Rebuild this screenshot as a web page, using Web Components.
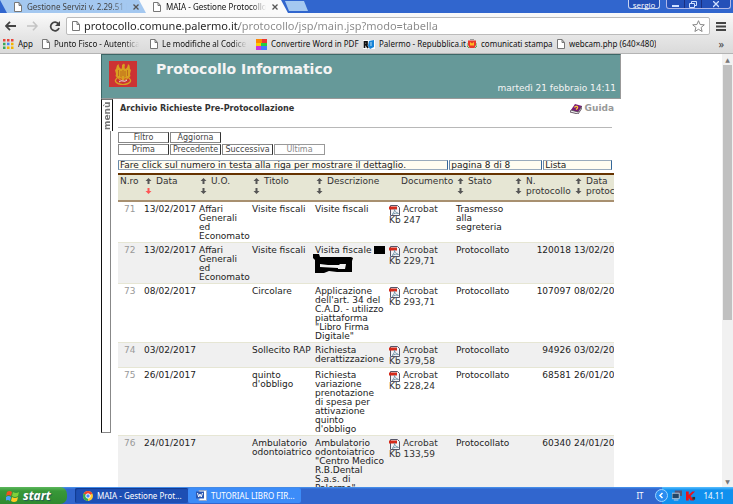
<!DOCTYPE html>
<html lang="it">
<head>
<meta charset="utf-8">
<title>MAIA - Gestione Protocollo Informatico</title>
<style>
html,body{height:100%;margin:0}
body{font:9px/9px "DejaVu Sans",sans-serif;color:#222;background:#fff;overflow:hidden}
</style>
</head>
<body>
<desktop-screen></desktop-screen>
<script>
function define(name, css, html, setup) {
  const t = document.createElement('template');
  t.innerHTML = '<style>*{box-sizing:border-box}a{color:inherit;text-decoration:none}svg{display:block;flex:none}button{font:inherit;margin:0;padding:0;cursor:pointer}' + css + '</style>' + html;
  customElements.define(name, class extends HTMLElement {
    connectedCallback() {
      if (this.shadowRoot) return;
      const root = this.attachShadow({ mode: 'open' });
      root.append(t.content.cloneNode(true));
      if (setup) setup.call(this, root);
    }
  });
}
const pageIcon = '<svg width="8" height="10" viewBox="0 0 8 10"><path d="M.5.5h4.5l2.500 3v6h-7zM5 .5v3h2.500" fill="#fff" stroke="#777"/></svg>';
const icons = {
  page: pageIcon,
  apps: '<svg width="11" height="10" viewBox="0 0 11 10"><path fill="#e8453c" d="M0 0h2.500v2.500H0zM4 0h2.500v2.500H4zM8 0h2.500v2.500H8z"/><path fill="#3aa757" d="M0 3.700h2.500v2.500H0zM0 7.400h2.500v2.500H0z"/><path fill="#4688f1" d="M4 3.700h2.500v2.500H4z"/><path fill="#f4b400" d="M8 3.700h2.500v2.500H8zM4 7.400h2.500v2.500H4zM8 7.400h2.500v2.500H8z"/></svg>',
  rainbow: '<svg width="11" height="11" viewBox="0 0 11 11"><path fill="#e33" d="M0 0h11v4H0z"/><path fill="#f80" d="M0 0h6v4H0z"/><path fill="#fc0" d="M0 4h5v3H0z"/><path fill="#2c4" d="M5 4h6v3H5z"/><path fill="#c3d" d="M0 7h5v4H0z"/><path fill="#47f" d="M5 7h6v4H5z"/></svg>',
  rep: '<svg width="12" height="9" viewBox="0 0 12 9"><path fill="#fff" d="M0 0h12v9H0z"/><path d="M1.500 1v7M1 1.800h3v2.500H1M3 4.500l2 3.500" fill="none" stroke="#111" stroke-width="1.700"/><path d="M6 1l5-1v7l-4 2-2-3z" fill="#1683d8"/><path d="M8 2v4" stroke="#bde"/></svg>',
  crest: '<svg width="10" height="10" viewBox="0 0 10 10"><path d="M3 0h4v1H3z" fill="#999"/><path d="M1 1.500h8v4.500L7.500 9h-5L1 6z" fill="#e8392b"/><path d="M3 6.500V3l2 1.500L7 3v3.500z" fill="#fb2"/><path d="M0 4v3l2 2M10 4v3L8 9" stroke="#5a5" fill="none"/></svg>'
};

define('browser-tab', `
:host{display:flex;align-items:center;width:149px;height:13px;background:#a4c8f0;clip-path:polygon(0 0,142px 0,100% 100%,7px 100%);padding:0 8px 0 14px;color:#444;font:8px/12px "Noto Sans",sans-serif}
:host([active]){background:#fafafa;color:#111}
a{display:flex;align-items:center;gap:5px;flex:1;min-width:0}
span{white-space:nowrap;overflow:hidden;-webkit-mask-image:linear-gradient(90deg,#000 85%,transparent)}
button{border:0;background:none;display:flex;width:10px;justify-content:center;margin-left:4px}`,
`<a href="#">${pageIcon}<span><slot></slot></span></a><button aria-label="Chiudi scheda"><svg width="6" height="6" viewBox="0 0 6 6"><path d="M.5.5l5 5M5.500.5l-5 5" stroke="#555" stroke-width="1.300"/></svg></button>`);

define('tab-strip', `
:host{display:flex;height:13px;background:#3166ce;align-items:stretch}
.new{width:23px;height:10px;border:0;background:#a4c8f0;clip-path:polygon(0 0,19px 0,100% 100%,4px 100%);margin:1px 0 0 -3px}
browser-tab+browser-tab{margin-left:-10px}
.fill{flex:1}
.user{width:32px;height:9px;border:1px solid #c8d4f0;border-top:0;border-radius:0 0 3px 3px;background:#2450b8;color:#fff;font:8px/7px "Open Sans",sans-serif}
.win{display:flex;margin:0 2px 0 6px;height:9px;border:1px solid #b0b8e8;border-top:0;border-radius:0 0 3px 3px;background:#2450b8}
.win button{width:17px;border:0;background:none;display:flex;justify-content:center;align-items:center}
.win button+button{border-left:1px solid #1a2f80}
.win button:last-child{width:29px}`,
`<browser-tab>Gestione Servizi v. 2.29.51 b</browser-tab><browser-tab active>MAIA - Gestione Protocollo In</browser-tab><button class="new" aria-label="Nuova scheda"></button><div class="fill"></div><button class="user">sergio</button>
<div class="win"><button aria-label="Riduci"><svg width="7" height="6"><path d="M0 5h7" stroke="#cfe0ff" stroke-width="2"/></svg></button><button aria-label="Ripristina"><svg width="8" height="7" fill="none" stroke="#cfe0ff"><path d="M2.500 2V.5h5v4H6M.5 2.500h5v4h-5z"/></svg></button><button aria-label="Chiudi"><svg width="6" height="7"><path d="M0 0l6 6M6 0L0 6" stroke="#cfe0ff" stroke-width="1.300"/></svg></button></div>`);

define('address-bar', `
:host{display:flex;align-items:center;height:23px;padding:4px 7px 1px 5px;background:linear-gradient(#fafafa,#e6e6e6);gap:11px}
button{border:0;background:none;display:flex}
form{flex:1;display:flex;align-items:center;height:18px;margin:0 -5px 0 -6px;padding:0 4px 0 5px;border:1px solid #bbb;border-radius:2px;background:#fff;gap:4px}
input{flex:1;min-width:0;border:0;outline:0;padding:0;height:16px;font:11px/16px "Noto Sans",sans-serif;color:transparent;background:linear-gradient(90deg,#222 155px,#888 155px);-webkit-background-clip:text;background-clip:text}`,
`<button aria-label="Indietro"><svg width="11" height="10" viewBox="0 0 11 10"><path d="M5 .8L1 5l4 4.200M1 5h10" stroke="#444" stroke-width="1.800" fill="none"/></svg></button>
<button aria-label="Avanti"><svg width="11" height="10" viewBox="0 0 11 10"><path d="M6 .8L10 5 6 9.200M10 5H0" stroke="#c4c4c4" stroke-width="1.600" fill="none"/></svg></button>
<button aria-label="Ricarica"><svg width="12" height="11" viewBox="0 0 12 11"><path d="M9.500 3A4.300 4.300 0 1 0 10 7" stroke="#444" stroke-width="1.800" fill="none"/><path d="M11 0v5H6z" fill="#444"/></svg></button>
<form>${pageIcon}<input aria-label="Indirizzo" value="protocollo.comune.palermo.it/protocollo/jsp/main.jsp?modo=tabella"><button type="button" aria-label="Preferiti"><svg width="13" height="12" viewBox="0 0 13 12"><path d="M6.500.7l1.600 3.800 4.200.3-3.200 2.700 1 4-3.600-2.200-3.600 2.200 1-4L.7 4.800l4.200-.3z" fill="#fff" stroke="#888"/></svg></button></form>
<button aria-label="Menu"><svg width="10" height="9"><path d="M0 1h10M0 4.500h10M0 8h10" stroke="#444" stroke-width="2"/></svg></button>`);

define('bookmark-item', `
:host{display:block;flex:none;width:var(--w)}
a{display:flex;align-items:center;gap:4px}
span{white-space:nowrap;overflow:hidden}
:host([fade]) span{-webkit-mask-image:linear-gradient(90deg,#000 82%,transparent)}`,
`<a href="#"><i></i><span><slot></slot></span></a>`, function (root) { root.querySelector('i').outerHTML = icons[this.getAttribute('icon')]; });

define('bookmarks-bar', `
:host{display:flex;align-items:center;height:18px;padding:0 9px 1px 3px;background:linear-gradient(#e6e6e6,#dadada);border-bottom:1px solid #b4b4b4;font:8px/12px "Noto Sans",sans-serif;color:#111}
button{margin-left:auto;border:0;background:none;font-size:11px;line-height:12px;color:#444}`,
`<bookmark-item icon="apps" style="--w:39px">App</bookmark-item>
<bookmark-item icon="page" fade style="--w:97px;margin-right:11px">Punto Fisco - Autenticaz</bookmark-item>
<bookmark-item icon="page" fade style="--w:97px;margin-right:9px">Le modifiche al Codice di</bookmark-item>
<bookmark-item icon="rainbow" style="--w:107px">Convertire Word in PDF</bookmark-item>
<bookmark-item icon="rep" style="--w:104px">Palermo - Repubblica.it</bookmark-item>
<bookmark-item icon="crest" style="--w:90px">comunicati stampa</bookmark-item>
<bookmark-item icon="page" style="--w:110px">webcam.php (640×480)</bookmark-item>
<button aria-label="Altri preferiti">»</button>`);

define('app-header', `
:host{display:flex;height:45px;background:#669999;border:1px solid #3c6666;border-right:1px solid #999;border-bottom:1px solid #999;padding:6px 4px 4px 7px;color:#f4f4f4}
.logo{background:#cc3333;width:28px;height:26px}
h1{margin:1px 0 0 19px;font-size:14px;line-height:15px}
time{margin-left:auto;align-self:flex-end;line-height:11px}`,
`<svg class="logo" viewBox="0 0 28 26"><g fill="#d8a020"><path d="M13 4l2-1.500 1 1.500-.5 2 .5 2q2.500-.5 3-5l1.500 1.500.5 3.500 1 1-1 4 .5 2-2.500 3-2-.5-1.500-1-.5 3h-2l-.5-3-1.500 1-2 .5-2.500-3 .5-2-1-4 1-1L8 4.500 9.500 3q.5 4.500 3 5l.5-2z"/></g><path d="M8 17q-2 2-1.500 3.500Q9 23.500 14 23.500t7.500-3Q22 19 20 17M10 19q4-3 8 0" stroke="#d8a020" stroke-width="1.200" fill="none"/><path d="M10 21q2-2 4-1t4-1" stroke="#e4d8e0" fill="none"/><path d="M9.500 9v6M12 10v6M16 10v6M18.500 9v6M14 9v6" stroke="#b3541e" stroke-width=".7"/></svg>
<h1>Protocollo Informatico</h1><time>martedì 21 febbraio 14:11</time>`);

define('side-menu', `
:host{display:flex;flex-direction:column;align-items:flex-start;width:13px;height:334px;flex:none}
button{writing-mode:vertical-rl;transform:rotate(180deg);width:12px;height:32px;border:0;border-left:1px solid #111;border-right:1px solid #111;border-bottom:1px solid #777;background:#fff;font:bold 9px/9px "DejaVu Sans",sans-serif;color:#777;text-align:center}
div{flex:1;width:10px;border:solid #888;border-width:0 1px 1px 0;border-left:1px solid #111}`,
`<button>menù</button><div></div>`);

define('page-title', `
:host{display:flex;align-items:flex-start;height:29px;padding:4px 0 0 2px;border-bottom:1px solid #b8b8b8;margin-right:2px}
h2{margin:0;font:bold 9px/11px "DejaVu Sans Condensed","DejaVu Sans",sans-serif;color:#333}
a{display:flex;gap:3px;margin:0 -2px 0 auto;font-weight:bold;line-height:11px;color:#999}`,
`<h2><slot></slot></h2><a href="#"><svg width="12" height="11" viewBox="0 0 12 11"><path d="M1 7l4-6 7 2-4 6z" fill="#7a1b78"/><path d="M1 7l7 2 4-6v2L8 11 0 9z" fill="#eee" stroke="#434" stroke-width=".8"/><path d="M4.500 4.500c1-2 4-1 3 .5L6 6.500" stroke="#fc3" stroke-width="1.200" fill="none"/></svg>Guida</a>`);

define('list-toolbar', `
:host{display:grid;grid-template-columns:repeat(4,51px);gap:1px;padding-top:4px;margin-bottom:5px}
button{height:11px;border:1px solid #888;border-right-color:#333;background:#fff;font:8px/8px "DejaVu Sans",sans-serif;color:#444;white-space:nowrap}
.off{color:#888;border-color:#999}
.first{grid-column:1}`,
`<button>Filtro</button><button>Aggiorna</button><button class="first">Prima</button><button>Precedente</button><button>Successiva</button><button class="off">Ultima</button>`);

define('info-bar', `
:host{display:grid;grid-template-columns:331fr 93fr 69fr;gap:1px;margin:0 2px 3px 0}
div{height:10px;border:1px solid #9ab;border-right-color:#369;border-left-color:#68a;background:#fffcf0;padding:0 1px;line-height:9px;white-space:nowrap}`,
`<div>Fare click sul numero in testa alla riga per mostrare il dettaglio.</div><div>pagina 8 di 8</div><div>Lista</div>`);

const arrow = (up, c) => `<button aria-label="${up ? 'Ordine crescente' : 'Ordine decrescente'}"><svg width="7" height="6" viewBox="0 0 7 6"><path d="${up ? 'M3.500 0L6.500 3H4.500V6H2.500V3H.5z' : 'M3.500 6L6.500 3H4.500V0H2.500V3H.5z'}" fill="${c}"/></svg></button>`;
const pdf = '<svg width="11" height="11" viewBox="0 0 11 11"><path d="M1.500.5h7l2 2v8h-9z" fill="#f4f4f8" stroke="#556"/><path d="M0 1.500h8v3H0z" fill="#d42a1a"/><path d="M3 9.500c2-1 3-5 2.500-5.500s0 3 4 4.500c-2-1-4 0-6.500 1" stroke="#79a" fill="none"/></svg>';
const box = '<svg width="11" height="8" viewBox="0 0 11 8"><path d="M0 0h11v8H0z"/></svg>';
const mark = '<svg class="mark" width="41" height="20" viewBox="0 0 41 20"><path fill-rule="evenodd" d="M0 0h6l1 3h31l2 1-1 3v11H24l-8-1-5 2H2V6L0 4zM7 10v3l18 1v1h7l1-5h-6l-1 1H15z"/></svg>';
const rows = [
  ['71','13/02/2017','Affari<br>Generali<br>ed<br>Economato','Visite fiscali','Visite fiscali','247','Trasmesso<br>alla<br>segreteria','',''],
  ['72','13/02/2017','Affari<br>Generali<br>ed<br>Economato','Visite fiscali','<span class="red">Visita fiscale '+box+'</span>'+mark,'229,71','Protocollato','120018','13/02/2017'],
  ['73','08/02/2017','','Circolare','Applicazione<br>dell\'art. 34 del<br>C.A.D. - utilizzo<br>piattaforma<br>"Libro Firma<br>Digitale"','293,71','Protocollato','107097','08/02/2017'],
  ['74','03/02/2017','','Sollecito RAP','Richiesta<br>derattizzazione','379,58','Protocollato','94926','03/02/2017'],
  ['75','26/01/2017','','quinto<br>d\'obbligo','Richiesta<br>variazione<br>prenotazione<br>di spesa per<br>attivazione<br>quinto<br>d\'obbligo','228,24','Protocollato','68581','26/01/2017'],
  ['76','24/01/2017','','Ambulatorio<br>odontoiatrico','Ambulatorio<br>odontoiatrico<br>"Centro Medico<br>R.B.Dental<br>S.a.s. di<br>Palermo"','133,59','Protocollato','60340','24/01/2017']
];
define('records-table', `
:host{display:block;overflow:hidden}
table{table-layout:fixed;width:536px;border-collapse:collapse}
th{height:27px;padding:1px 0 2px;background:#e6e6d4;border-top:2px solid #663300;border-bottom:2px solid #a89070;text-align:left;vertical-align:top;font-weight:normal;white-space:nowrap;line-height:10px;color:#333}
th>div{display:grid;grid-template-columns:8px auto;gap:0 4px;justify-content:start}
th>div>span{grid-row:1/3;grid-column:2}
th button{grid-column:1;border:0;background:none;height:10px;display:flex;align-items:center;justify-content:center}
.plain{padding-left:2px}.doc{padding-left:12px}
td{padding:3px 0 1px;vertical-align:top;white-space:nowrap;border-bottom:1px solid #e6e6d4}
tr:nth-child(even) td{background:#f0f0f0}
td:first-child{padding-left:6px;color:#999}
td:nth-child(8){text-align:right;padding-right:3px}
td:nth-child(6){color:#333}
.pdf{display:flex;gap:3px}
.red{display:flex;gap:3px}.mark{margin:-1px 0 0 -2px}`,
`<table><colgroup><col style="width:26px"><col style="width:55px"><col style="width:53px"><col style="width:63px"><col style="width:74px"><col style="width:67px"><col style="width:58px"><col style="width:60px"><col style="width:80px"></colgroup><thead><tr></tr></thead><tbody></tbody></table>`,
function (root) {
  root.querySelector('thead tr').innerHTML = ['N.ro','Data','U.O.','Titolo','Descrizione','Documento','Stato','N.<br>protocollo','Data<br>protocollo'].map((h, i) =>
    i === 0 || i === 5 ? `<th class="${i ? 'doc' : 'plain'}">${h}</th>` :
    `<th><div>${arrow(true, '#555')}<span>${h}</span>${arrow(false, i === 1 ? '#f55' : '#555')}</div></th>`).join('');
  root.querySelector('tbody').innerHTML = rows.map(r => '<tr>' + r.map((c, i) =>
    i === 0 ? `<td><a href="#">${c}</a></td>` :
    i === 5 ? `<td><a href="#" class="pdf">${pdf}Acrobat</a><div>Kb ${c}</div></td>` : `<td>${c}</td>`).join('') + '</tr>').join('');
});

define('protocol-app', `
:host{display:block;max-width:520px;margin:0 auto}
.body{display:flex;gap:4px}
main{flex:1;min-width:0;padding-right:7px}`,
`<app-header></app-header><div class="body"><side-menu></side-menu><main><page-title>Archivio Richieste Pre-Protocollazione</page-title><list-toolbar></list-toolbar><info-bar></info-bar><records-table></records-table></main></div>`);

define('scroll-rail', `
:host{display:flex;flex-direction:column;width:11px;flex:none;background:#f1f1f1;align-items:center}
button{border:0;background:none;height:11px;width:11px;font:6px/11px "DejaVu Sans",sans-serif;color:#777}
.thumb{width:9px;height:59%;background:#c0c0c0}
button:last-child{margin-top:auto}`,
`<button aria-label="Su">▲</button><div class="thumb"></div><button aria-label="Giù">▼</button>`);

define('task-button', `
:host{display:block}
button{display:flex;align-items:center;gap:4px;width:113px;height:15px;border:0;border-radius:2px;padding:0 8px;background:#3c8cf8;color:#fff;font:8px/13px "Noto Sans",sans-serif;white-space:nowrap}
:host([active]) button{background:#1d4fb4;box-shadow:inset 1px 1px 1px #123a90}`,
`<button><slot name="icon"></slot><slot></slot></button>`);

define('task-bar', `
:host{display:flex;align-items:center;height:17px;flex:none;background:linear-gradient(#4a98f0,#3166ce 2px);color:#fff;font:8px/13px "Noto Sans",sans-serif}
.start{display:flex;align-items:center;gap:4px;width:67px;height:17px;padding:0 6px;border:0;border-radius:0 7px 7px 0;background:linear-gradient(#5cb85c,#389838 4px,#2f8a2f);color:#fff;font:italic bold 12px/15px "Open Sans",sans-serif;text-shadow:1px 1px 1px #255;margin-right:8px}
.lang{margin-left:auto;margin-right:18px}
.tray{display:flex;align-items:center;gap:4px;height:17px;padding:0 9px 0 0;background:linear-gradient(#5cc0ff,#1090ee 3px)}
.tray svg:first-child{margin-left:-7px}
.tray time{margin-left:4px}`,
`<button class="start"><svg width="13" height="12" viewBox="0 0 13 12"><path d="M1 2q2.500-2 5 0L5 6Q3 4 0 6z" fill="#f25022"/><path d="M7 2q3 2 6 0l-1 4q-3 2-6 0z" fill="#7fd03a"/><path d="M0 7q2.500-2 5 0l-1 4Q2 9-1 11z" fill="#4aa0ff"/><path d="M6 7q3 2 6 0l-1 4q-3 2-6 0z" fill="#ffc820"/></svg>start</button>
<task-button active><svg slot="icon" width="10" height="10" viewBox="0 0 10 10"><circle cx="5" cy="5" r="5" fill="#fc3"/><path d="M5 5L.7 2.500A5 5 0 0 1 9.300 2.500z" fill="#e43"/><path d="M5 5L.7 2.500A5 5 0 0 0 5 10z" fill="#3a5"/><circle cx="5" cy="5" r="2.200" fill="#48f" stroke="#fff"/></svg>MAIA - Gestione Prot...</task-button>
<task-button><svg slot="icon" width="11" height="11" viewBox="0 0 11 11"><path d="M3 .5h7.500v10H3z" fill="#fff" stroke="#9ac"/><path d="M0 1.500h8v7H0z" fill="#2a56b0"/><path d="M1.500 3l1.200 4L4 4l1.300 3 1.200-4" fill="none" stroke="#fff"/></svg>TUTORIAL LIBRO FIR...</task-button>
<span class="lang">IT</span><div class="tray"><svg width="13" height="13" viewBox="0 0 13 13"><circle cx="6.500" cy="6.500" r="6" fill="#2a8cf0" stroke="#9cd4ff"/><path d="M7.500 4L5 6.500 7.500 9" fill="none" stroke="#fff" stroke-width="1.500"/></svg><svg width="10" height="11" viewBox="0 0 11 11"><path d="M3 0h8v6H3z" fill="#557"/><path d="M0 3h8v6H0z" fill="#246" stroke="#bcd"/><path d="M2 10.500h5" stroke="#ccd"/></svg><svg width="10" height="10" viewBox="0 0 11 10"><path d="M0 0h3v4l4-4h3L5 5l4 5H5L3 7v3H0z" fill="#e8121c"/><path d="M7 6h3v3H7z" fill="#333"/></svg><time>14.11</time></div>`);

define('desktop-screen', `
:host{display:flex;flex-direction:column;height:100vh}
.view{flex:1;min-height:0;display:flex;overflow:hidden}
.page{flex:1;min-width:0;overflow:hidden}`,
`<tab-strip></tab-strip><address-bar></address-bar><bookmarks-bar></bookmarks-bar><div class="view"><div class="page"><protocol-app></protocol-app></div><scroll-rail></scroll-rail></div><task-bar></task-bar>`);
</script>
</body>
</html>
